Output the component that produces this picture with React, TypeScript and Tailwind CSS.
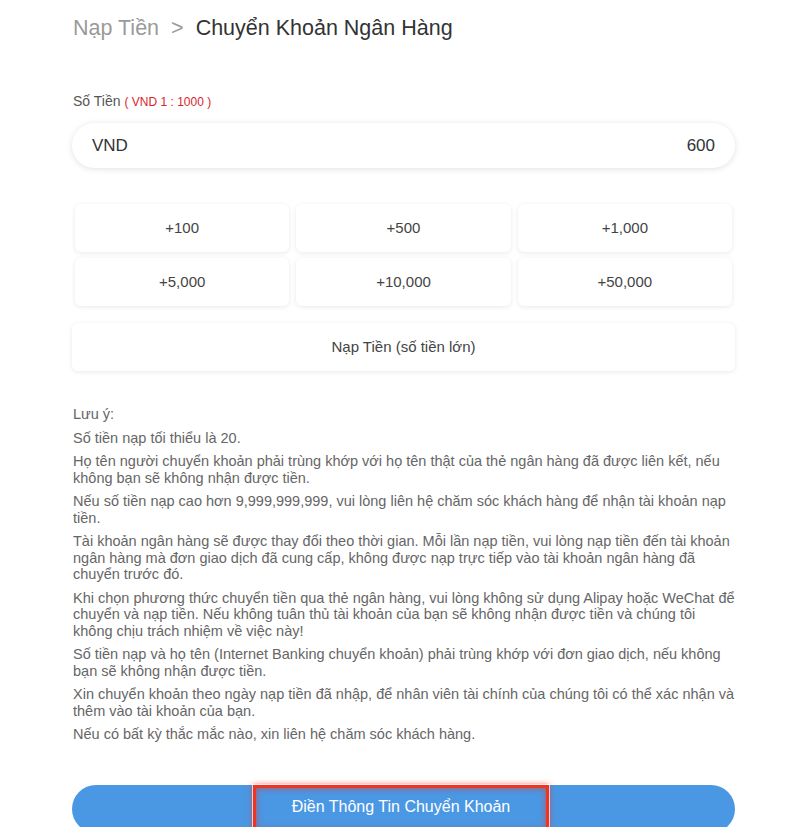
import React from 'react';

const amounts = ['+100', '+500', '+1,000', '+5,000', '+10,000', '+50,000'];

const notes = [
  'Số tiền nạp tối thiểu là 20.',
  'Họ tên người chuyển khoản phải trùng khớp với họ tên thật của thẻ ngân hàng đã được liên kết, nếu không bạn sẽ không nhận được tiền.',
  'Nếu số tiền nạp cao hơn 9,999,999,999, vui lòng liên hệ chăm sóc khách hàng để nhận tài khoản nạp tiền.',
  'Tài khoản ngân hàng sẽ được thay đổi theo thời gian. Mỗi lần nạp tiền, vui lòng nạp tiền đến tài khoản ngân hàng mà đơn giao dịch đã cung cấp, không được nạp trực tiếp vào tài khoản ngân hàng đã chuyển trước đó.',
  'Khi chọn phương thức chuyển tiền qua thẻ ngân hàng, vui lòng không sử dụng Alipay hoặc WeChat để chuyển và nạp tiền. Nếu không tuân thủ tài khoản của bạn sẽ không nhận được tiền và chúng tôi không chịu trách nhiệm về việc này!',
  'Số tiền nạp và họ tên (Internet Banking chuyển khoản) phải trùng khớp với đơn giao dịch, nếu không bạn sẽ không nhận được tiền.',
  'Xin chuyển khoản theo ngày nạp tiền đã nhập, để nhân viên tài chính của chúng tôi có thể xác nhận và thêm vào tài khoản của bạn.',
  'Nếu có bất kỳ thắc mắc nào, xin liên hệ chăm sóc khách hàng.',
];

const App: React.FC = () => {
  return (
    <div className="h-[827px] overflow-hidden bg-white font-['Liberation_Sans',Arial,sans-serif]">
      <div className="ml-[72px] w-[663px] pt-[15px]">
        <h1 className="pl-px text-[21.5px] leading-[26px]">
          <span className="text-[#9a9a9a]">Nạp Tiền</span>
          <span className="mx-[12px] text-[#9a9a9a]">&gt;</span>
          <span className="text-[#333]">Chuyển Khoản Ngân Hàng</span>
        </h1>

        <div className="mt-[51px] flex items-baseline pl-px text-[14px] leading-[18px] text-[#555]">
          <span>Số Tiền</span>
          <span className="ml-[4px] text-[12px] text-[#d9262c]">( VND 1 : 1000 )</span>
        </div>

        <div className="mt-[12px] flex h-[45px] items-center justify-between rounded-full bg-white px-[20px] text-[17px] text-[#333] shadow-[0_1px_6px_rgba(0,0,0,0.12)]">
          <span>VND</span>
          <span>600</span>
        </div>

        <div className="mx-[3px] mt-[36px] grid grid-cols-3 gap-x-[7px] gap-y-[6px]">
          {amounts.map((a) => (
            <button
              key={a}
              className="h-[48px] rounded-[6px] bg-white text-[15px] text-[#444] shadow-[0_1px_5px_rgba(0,0,0,0.09)]"
            >
              {a}
            </button>
          ))}
        </div>

        <button className="mt-[17px] h-[48px] w-full rounded-[6px] bg-white text-[15px] text-[#444] shadow-[0_1px_5px_rgba(0,0,0,0.09)]">
          Nạp Tiền (số tiền lớn)
        </button>

        <div className="mt-[35px] pl-px text-[14.5px] leading-[16.5px] text-[#666]">
          <p>Lưu ý:</p>
          {notes.map((n) => (
            <p key={n} className="mt-[7px]">
              {n}
            </p>
          ))}
        </div>

        <div className="mt-[42px] flex h-[48px] justify-center rounded-full bg-[#4a97e4]">
          <div className="relative mr-[5px] flex h-full w-[296px] items-start justify-center pt-[10px]">
            <span className="text-[16px] text-white">Điền Thông Tin Chuyển Khoản</span>
            <div className="absolute inset-0 border-[3px] border-[#f0341f] shadow-[0_0_6px_rgba(240,52,31,0.8),inset_0_0_6px_rgba(240,52,31,0.7)] outline outline-1 outline-white/70" />
          </div>
        </div>
      </div>
    </div>
  );
};

export default App;
